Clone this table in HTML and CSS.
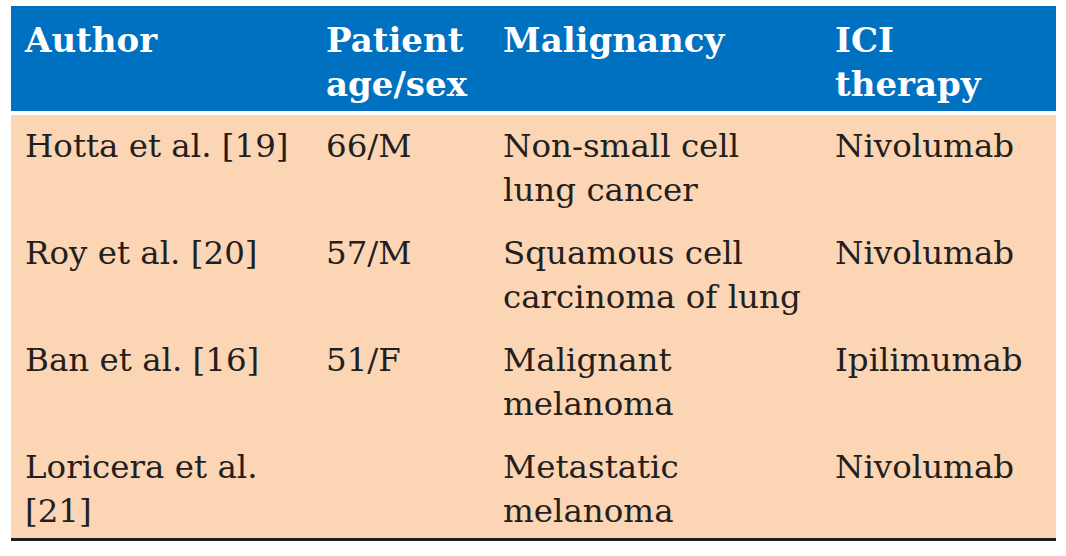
FILE: index.html
```html
<!DOCTYPE html>
<html>
<head>
<meta charset="utf-8">
<link rel="stylesheet" href="styles.css">
</head>
<body>
<div class="table">
  <div class="row head">
    <div class="cell">Author</div>
    <div class="cell">Patient<br>age/sex</div>
    <div class="cell">Malignancy</div>
    <div class="cell">ICI<br>therapy</div>
  </div>
  <div class="tbody">
    <div class="row">
      <div class="cell">Hotta et al. [19]</div>
      <div class="cell">66/M</div>
      <div class="cell">Non-small cell<br>lung cancer</div>
      <div class="cell">Nivolumab</div>
    </div>
    <div class="row">
      <div class="cell">Roy et al. [20]</div>
      <div class="cell">57/M</div>
      <div class="cell">Squamous cell<br>carcinoma of lung</div>
      <div class="cell">Nivolumab</div>
    </div>
    <div class="row">
      <div class="cell">Ban et al. [16]</div>
      <div class="cell">51/F</div>
      <div class="cell">Malignant<br>melanoma</div>
      <div class="cell">Ipilimumab</div>
    </div>
    <div class="row">
      <div class="cell">Loricera et al.<br>[21]</div>
      <div class="cell"></div>
      <div class="cell">Metastatic<br>melanoma</div>
      <div class="cell">Nivolumab</div>
    </div>
  </div>
</div>
</body>
</html>
```

FILE: styles.css
```css
html, body {
  margin: 0;
  background: #ffffff;
}
body {
  padding: 6px 10px 0 11px;
  font-family: "DejaVu Serif", "Liberation Serif", serif;
  font-size: 32.5px;
  line-height: 44px;
  color: #231f20;
}
.table {
  width: 1045px;
}
.row {
  display: grid;
  grid-template-columns: 301px 177px 332px 235px;
}
.cell {
  padding-left: 14px;
  white-space: nowrap;
}
.head {
  background: #0070c0;
  color: #ffffff;
  font-weight: bold;
  font-size: 34px;
  padding: 12px 0 5px;
  margin-bottom: 4px;
}
.tbody {
  background: #fcd5b4;
  border-bottom: 3px solid #231f20;
}
.tbody .row {
  padding: 9px 0 10px;
}
.tbody .row:last-child {
  padding-bottom: 5px;
}
```
